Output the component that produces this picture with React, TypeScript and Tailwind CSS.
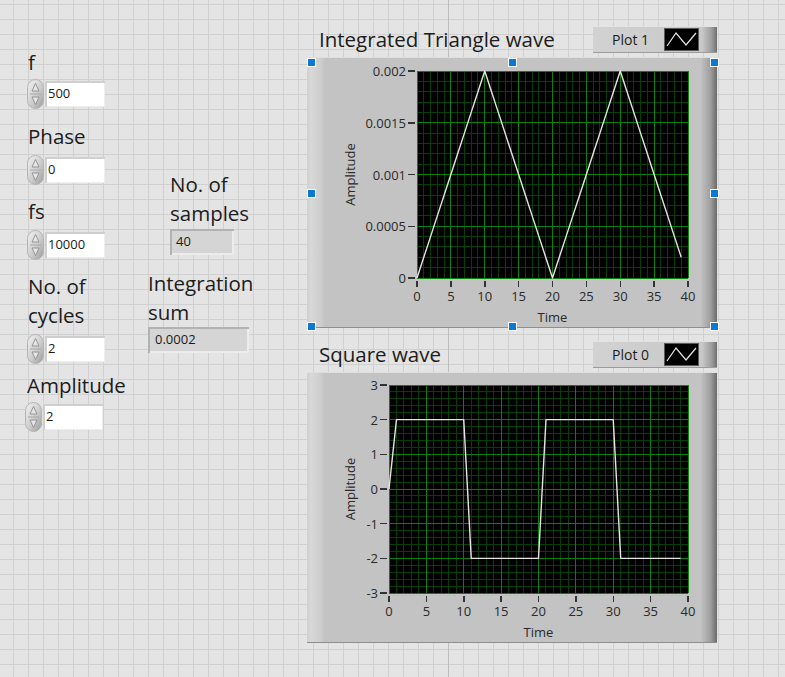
import clsx from 'clsx'

const FONT = "font-['Open_Sans',sans-serif]"

const TRIANGLE = Array.from({ length: 40 }, (_, t) => {
  const p = t % 20
  return (p <= 10 ? p : 20 - p) * 0.0002
})

const SQUARE = Array.from({ length: 40 }, (_, t) => {
  if (t === 0) return 0
  return Math.floor((t - 1) / 10) % 2 === 0 ? 2 : -2
})

function Spinner() {
  return (
    <svg width="17" height="30" viewBox="0 0 17 30">
      <defs>
        <linearGradient id="spin" x1="0" y1="0" x2="1" y2="1">
          <stop offset="0" stopColor="#f2f2f2" />
          <stop offset="0.55" stopColor="#cdcdcd" />
          <stop offset="1" stopColor="#9a9a9a" />
        </linearGradient>
      </defs>
      <rect x="0.5" y="0.5" width="16" height="29" rx="8" fill="url(#spin)" stroke="#b4b4b4" />
      <line x1="3" y1="15" x2="14" y2="15" stroke="#a8a8a8" />
      <polygon points="8.5,4.5 5,12 12,12" fill="#e6e6e6" stroke="#8c8c8c" strokeWidth="0.9" />
      <polygon points="5,18 12,18 8.5,25.5" fill="#e6e6e6" stroke="#8c8c8c" strokeWidth="0.9" />
    </svg>
  )
}

function NumericControl({ value, className }: { value: string; className?: string }) {
  return (
    <div className={clsx('flex h-[30px] items-center', className)}>
      <Spinner />
      <div className="ml-px flex h-[26px] w-[60px] items-center bg-white pl-[3px] text-[13px] text-[#1a1a1a] shadow-[inset_2px_2px_0_#cfcfcf,inset_-1px_-1px_0_#eeeeee]">
        {value}
      </div>
    </div>
  )
}

function Indicator({ value, className }: { value: string; className?: string }) {
  return (
    <div
      className={clsx(
        'flex h-[26px] items-center bg-[#d5d5d5] text-[13px] text-[#1a1a1a] shadow-[inset_2px_2px_0_#b2b2b2,inset_-2px_-2px_0_#ececec]',
        className,
      )}
    >
      {value}
    </div>
  )
}

function Label({ children, className }: { children: React.ReactNode; className?: string }) {
  return <div className={clsx('text-[20.5px] leading-[29px] text-[#1c1c1c]', className)}>{children}</div>
}

type Plot = { x: number; y: number; w: number; h: number }

function Graph({
  plot,
  yMin,
  yMax,
  yLabels,
  data,
}: {
  plot: Plot
  yMin: number
  yMax: number
  yLabels: string[]
  data: number[]
}) {
  const yDiv = yLabels.length - 1
  const yMinor = yDiv * 5
  const px = (t: number) => plot.x + (t / 40) * plot.w
  const py = (v: number) => plot.y + plot.h - ((v - yMin) / (yMax - yMin)) * plot.h
  const bottom = plot.y + plot.h

  return (
    <svg width="410" height="271" viewBox="0 0 410 271" className="block">
      <rect x={plot.x} y={plot.y} width={plot.w} height={plot.h} fill="#000" />
      <g shapeRendering="crispEdges">
        {Array.from({ length: 41 }, (_, t) =>
          t % 5 === 0 ? null : (
            <line key={'vm' + t} x1={px(t)} x2={px(t)} y1={plot.y} y2={bottom} stroke="#063f06" />
          ),
        )}
        {Array.from({ length: yMinor + 1 }, (_, k) =>
          k % 5 === 0 ? null : (
            <line
              key={'hm' + k}
              x1={plot.x}
              x2={plot.x + plot.w}
              y1={bottom - (k * plot.h) / yMinor}
              y2={bottom - (k * plot.h) / yMinor}
              stroke="#063f06"
            />
          ),
        )}
        {Array.from({ length: 9 }, (_, i) => (
          <line key={'vM' + i} x1={px(i * 5)} x2={px(i * 5)} y1={plot.y} y2={bottom} stroke="#0b800b" />
        ))}
        {Array.from({ length: yDiv + 1 }, (_, k) => (
          <line
            key={'hM' + k}
            x1={plot.x}
            x2={plot.x + plot.w}
            y1={bottom - (k * plot.h) / yDiv}
            y2={bottom - (k * plot.h) / yDiv}
            stroke="#0b800b"
          />
        ))}
        {yLabels.map((_, k) => (
          <line
            key={'yt' + k}
            x1={plot.x - 9}
            x2={plot.x - 2}
            y1={bottom - (k * plot.h) / yDiv}
            y2={bottom - (k * plot.h) / yDiv}
            stroke="#333"
            strokeWidth="1.5"
          />
        ))}
        {Array.from({ length: 9 }, (_, i) => (
          <line key={'xt' + i} x1={px(i * 5)} x2={px(i * 5)} y1={bottom + 3} y2={bottom + 9} stroke="#333" strokeWidth="1.5" />
        ))}
      </g>
      <polyline
        points={data.map((v, t) => `${px(t)},${py(v)}`).join(' ')}
        fill="none"
        stroke="#e4e4e4"
        strokeWidth="1.4"
        strokeLinejoin="round"
      />
      <g fontFamily="'Open Sans', sans-serif" fontSize="13" fill="#2a2a2a">
        {yLabels.map((l, k) => (
          <text key={'yl' + k} x={plot.x - 11} y={bottom - (k * plot.h) / yDiv} textAnchor="end" dominantBaseline="central">
            {l}
          </text>
        ))}
        {Array.from({ length: 9 }, (_, i) => (
          <text key={'xl' + i} x={px(i * 5)} y={bottom + 18} textAnchor="middle" dominantBaseline="central">
            {i * 5}
          </text>
        ))}
        <text x={plot.x + plot.w / 2} y={259} textAnchor="middle" dominantBaseline="central">
          Time
        </text>
        <text
          x={43}
          y={plot.y + plot.h / 2}
          textAnchor="middle"
          dominantBaseline="central"
          transform={`rotate(-90 43 ${plot.y + plot.h / 2})`}
        >
          Amplitude
        </text>
      </g>
    </svg>
  )
}

function Legend({ name }: { name: string }) {
  return (
    <div className="mt-px flex h-[27px] w-[124px] items-center border-t border-t-[#e2e2e2] border-b border-b-[#9c9c9c] bg-[linear-gradient(to_right,#d2d2d2,#c8c8c8_88%,#9a9a9a_96%,#6e6e6e)] pl-[19px]">
      <span className="w-[52px] text-[14px] text-[#1c1c1c]">{name}</span>
      <svg width="35" height="23" viewBox="0 0 35 23" className="block">
        <rect width="35" height="23" fill="#000" />
        <rect x="0.5" y="0.5" width="34" height="22" fill="none" stroke="#5a5a5a" />
        <polyline points="3,18 12,5 22,17 32,5" fill="none" stroke="#e6e6e6" strokeWidth="1.2" />
      </svg>
    </div>
  )
}

function Handle({ className }: { className: string }) {
  return <div className={clsx('absolute h-[9px] w-[9px] border border-white bg-[#0a78d4]', className)} />
}

function Chart({
  title,
  legend,
  plot,
  yMin,
  yMax,
  yLabels,
  data,
  selected,
  className,
}: {
  title: string
  legend: string
  plot: Plot
  yMin: number
  yMax: number
  yLabels: string[]
  data: number[]
  selected?: boolean
  className?: string
}) {
  return (
    <div className={className}>
      <div className="flex h-[32px] items-start justify-between">
        <div className="pl-[12px] text-[20.5px] leading-[29px] text-[#1c1c1c]">{title}</div>
        <Legend name={legend} />
      </div>
      <div className="relative h-[271px] w-[410px] border-t border-t-[#dedede] border-b border-b-[#8e8e8e] bg-[linear-gradient(to_right,#d0d0d0,#d8d8d8_4px,#cdcdcd_14px,#c3c3c3_18px,#c3c3c3_96%,#9c9c9c_98.5%,#6a6a6a)]">
        <Graph plot={plot} yMin={yMin} yMax={yMax} yLabels={yLabels} data={data} />
        {selected && (
          <>
            <Handle className="left-0 top-0" />
            <Handle className="left-[201px] top-0" />
            <Handle className="left-[403px] top-0" />
            <Handle className="left-0 top-[131px]" />
            <Handle className="left-[403px] top-[131px]" />
            <Handle className="left-0 top-[264px]" />
            <Handle className="left-[201px] top-[264px]" />
            <Handle className="left-[403px] top-[264px]" />
          </>
        )}
      </div>
    </div>
  )
}

export default function App() {
  return (
    <div
      className={clsx(
        FONT,
        'relative h-[677px] w-[785px] overflow-hidden bg-[#e4e4e4] [background-image:linear-gradient(to_right,#bdbdbd_1px,transparent_1px),linear-gradient(to_right,#d0d0d0_1px,transparent_1px),linear-gradient(to_bottom,#d0d0d0_1px,transparent_1px)] [background-size:100%_100%,15px_15px,15px_15px] [background-position:448px_0,13px_4px,13px_4px] [background-repeat:no-repeat,repeat,repeat]',
      )}
    >
      <div className="flex">
        {/* controls */}
        <div className="w-[148px] shrink-0 pl-[27px] pt-[48px]">
          <Label className="pl-px">f</Label>
          <NumericControl value="500" className="mt-[2px]" />
          <Label className="mt-[13px] pl-px">Phase</Label>
          <NumericControl value="0" className="mt-[4px]" />
          <Label className="mt-[12px] pl-px">fs</Label>
          <NumericControl value="10000" className="mt-[4px]" />
          <Label className="mt-[12px] pl-px">
            No. of
            <br />
            cycles
          </Label>
          <NumericControl value="2" className="mt-[4px]" />
          <Label className="mt-[7px]">Amplitude</Label>
          <NumericControl value="2" className="-ml-[2px] mt-[2px]" />
        </div>

        {/* indicators */}
        <div className="w-[159px] shrink-0 pt-[170px]">
          <Label className="ml-[22px]">
            No. of
            <br />
            samples
          </Label>
          <Indicator value="40" className="ml-[22px] mt-px w-[64px] pl-[6px]" />
          <Label className="mt-[14px]">
            Integration
            <br />
            sum
          </Label>
          <Indicator value="0.0002" className="w-[101px] pl-[7px]" />
        </div>

        {/* graphs */}
        <div className="w-[410px] shrink-0 pt-[25px]">
          <Chart
            title="Integrated Triangle wave"
            legend="Plot 1"
            plot={{ x: 110, y: 13, w: 271, h: 207 }}
            yMin={0}
            yMax={0.002}
            yLabels={['0', '0.0005', '0.001', '0.0015', '0.002']}
            data={TRIANGLE}
            selected
          />
          <Chart
            title="Square wave"
            legend="Plot 0"
            plot={{ x: 82, y: 12, w: 299, h: 208 }}
            yMin={-3}
            yMax={3}
            yLabels={['-3', '-2', '-1', '0', '1', '2', '3']}
            data={SQUARE}
            className="mt-[12px]"
          />
        </div>
      </div>
    </div>
  )
}
